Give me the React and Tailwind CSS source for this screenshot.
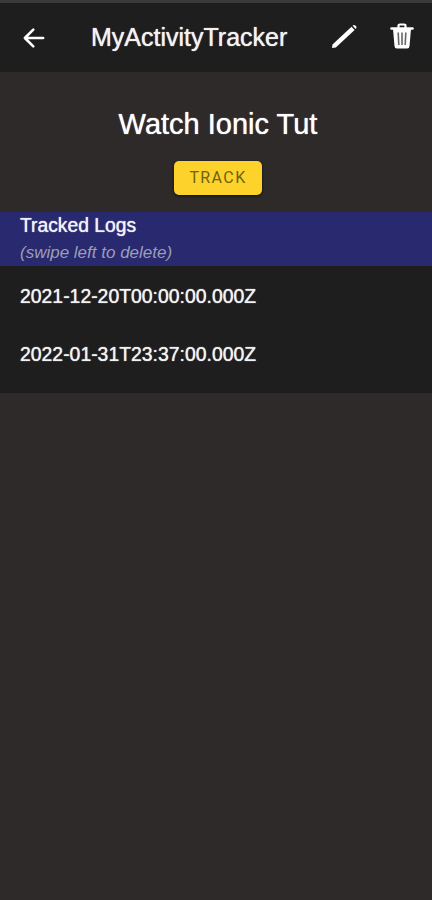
import React from "react";

export default function App() {
  return (
    <div className="w-[432px] h-[900px] flex flex-col bg-[#2e2a2a] text-white overflow-hidden" style={{ fontFamily: '"Liberation Sans", Arial, sans-serif' }}>
      <header className="h-[72px] shrink-0 bg-[#1e1e1e] border-t-[3px] border-[#3a3a3a] flex items-center pl-[20px] pr-[18px]">
        <svg width="30" height="30" viewBox="0 0 512 512" className="shrink-0 -ml-[1px]" fill="none" stroke="#fff" strokeWidth="44" strokeLinecap="round" strokeLinejoin="round">
          <path d="M244 400L100 256l144-144M120 256h292" />
        </svg>
        <h1 className="ml-[42px] -mt-[2px] text-[25px] leading-[30px] font-normal text-[#f2f2f2] [text-shadow:0_0_1px_#fff]">MyActivityTracker</h1>
        <div className="ml-auto pb-[4px] flex items-center gap-[31px]">
          <svg width="28" height="28" viewBox="0 0 28 28" fill="#fff">
            <path d="M1.5 22.5 L20.5 4.8 L23.6 8 L4.8 25.4 L1 26 Z" />
            <path d="M21.8 3.6 Q23 2.5 24.3 3.6 L25 4.3 Q26 5.5 25 6.6 L24.7 6.9 L21.6 3.8 Z" />
          </svg>
          <svg width="24" height="28" viewBox="0 0 24 28" fill="none">
            <path d="M1.5 6.5 H22.5" stroke="#fff" strokeWidth="2.6" strokeLinecap="round" />
            <path d="M8.5 6 V3.8 Q8.5 2.5 10 2.5 H14 Q15.5 2.5 15.5 3.8 V6" stroke="#fff" strokeWidth="2.2" />
            <path d="M3 7 L4.5 24 Q4.7 26.5 6.8 26.5 H17.2 Q19.3 26.5 19.5 24 L21 7 Z" fill="#fff" />
            <path d="M8.2 10.5 L8.8 23 M12 10.5 V23 M15.8 10.5 L15.2 23" stroke="#666" strokeWidth="1.6" />
          </svg>
        </div>
      </header>

      <main className="flex flex-col">
        <div className="flex flex-col items-center pl-[4px]">
          <h2 className="mt-[35px] text-[29px] leading-[34px] font-normal text-white [text-shadow:0_0_1px_#fff]">Watch Ionic Tut</h2>
          <button className="mt-[20px] w-[88px] h-[34px] bg-[#fdd22b] rounded-[5px] shadow-[0_1px_3px_rgba(0,0,0,0.7)] text-[#6c6410] text-[16px] tracking-[1.4px] font-normal" style={{ fontFamily: 'Roboto, sans-serif' }}>TRACK</button>
        </div>

        <section className="mt-[17px] h-[54px] bg-[#28296f] pl-[20px] pt-[3px]">
          <p className="text-[19.3px] leading-[22px] text-[#f0f0fa] [text-shadow:0_0_1px_#fff]">Tracked Logs</p>
          <p className="mt-[6px] text-[17px] leading-[20px] italic text-[#9d9db5]">(swipe left to delete)</p>
        </section>

        <section className="h-[127px] bg-[#1e1e1e] pl-[20px] pt-[2px] text-[19.4px] text-[#f2f2f2]">
          <div className="h-[58px] flex items-center [text-shadow:0_0_1px_#fff]">2021-12-20T00:00:00.000Z</div>
          <div className="h-[58px] flex items-center [text-shadow:0_0_1px_#fff]">2022-01-31T23:37:00.000Z</div>
        </section>
      </main>
    </div>
  );
}
